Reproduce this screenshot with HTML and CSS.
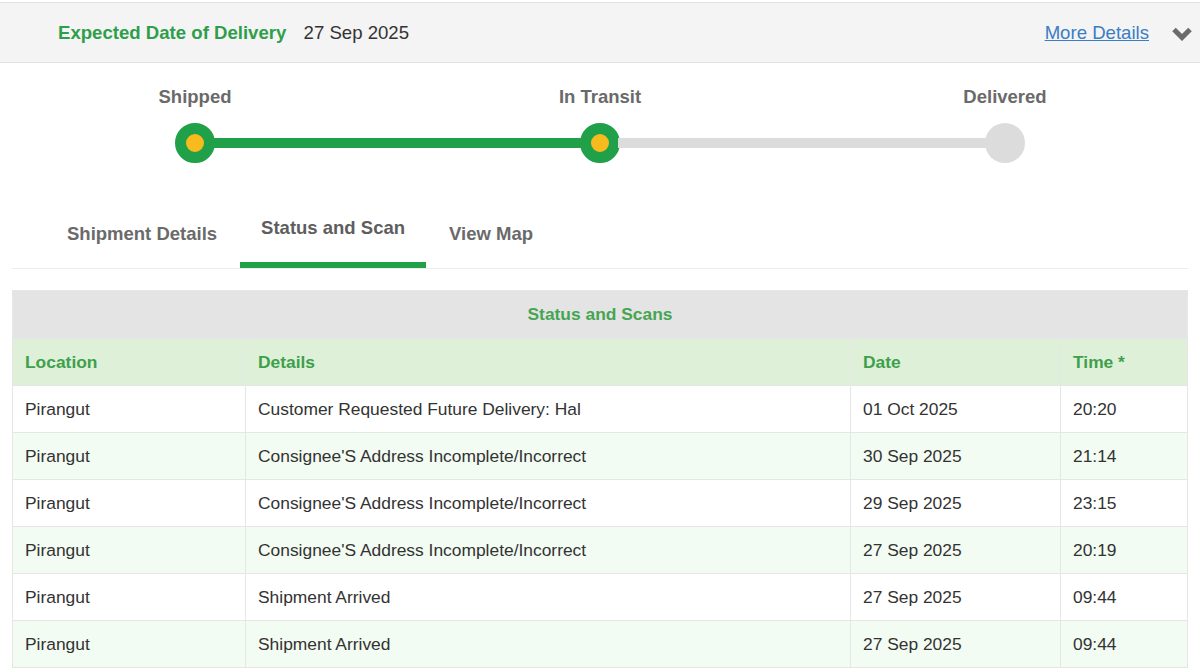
FILE: index.html
```html
<!DOCTYPE html>
<html lang="en">
<head>
    <meta charset="UTF-8">
    <meta name="viewport" content="width=device-width, initial-scale=1.0">
    <title>Track Shipment</title>
    <link rel="stylesheet" href="styles.css">
</head>
<body>
    <div class="delivery-bar">
        <div class="edd">
            <span class="edd-label">Expected Date of Delivery</span>
            <span class="edd-date">27 Sep 2025</span>
        </div>
        <div class="more">
            <a href="#" class="more-link">More Details</a>
            <svg class="chevron" width="22" height="14" viewBox="0 0 22 14">
                <polyline points="3,2.5 11,10.5 19,2.5" fill="none" stroke="#6b6b6b" stroke-width="5" stroke-linejoin="miter"/>
            </svg>
        </div>
    </div>

    <div class="progress">
        <div class="stop done">
            <div class="stop-label">Shipped</div>
            <div class="dot"></div>
        </div>
        <div class="connector done"></div>
        <div class="stop done">
            <div class="stop-label">In Transit</div>
            <div class="dot"></div>
        </div>
        <div class="connector"></div>
        <div class="stop">
            <div class="stop-label">Delivered</div>
            <div class="dot"></div>
        </div>
    </div>

    <div class="tabs">
        <div class="tab">Shipment Details</div>
        <div class="tab active">Status and Scan</div>
        <div class="tab">View Map</div>
    </div>

    <table class="scans">
        <colgroup>
            <col style="width: 233px">
            <col style="width: 605px">
            <col style="width: 210px">
            <col>
        </colgroup>
        <thead>
            <tr class="title-row"><th colspan="4">Status and Scans</th></tr>
            <tr class="head-row">
                <th>Location</th>
                <th>Details</th>
                <th>Date</th>
                <th>Time *</th>
            </tr>
        </thead>
        <tbody>
            <tr><td>Pirangut</td><td>Customer Requested Future Delivery: Hal</td><td>01 Oct 2025</td><td>20:20</td></tr>
            <tr><td>Pirangut</td><td>Consignee'S Address Incomplete/Incorrect</td><td>30 Sep 2025</td><td>21:14</td></tr>
            <tr><td>Pirangut</td><td>Consignee'S Address Incomplete/Incorrect</td><td>29 Sep 2025</td><td>23:15</td></tr>
            <tr><td>Pirangut</td><td>Consignee'S Address Incomplete/Incorrect</td><td>27 Sep 2025</td><td>20:19</td></tr>
            <tr><td>Pirangut</td><td>Shipment Arrived</td><td>27 Sep 2025</td><td>09:44</td></tr>
            <tr><td>Pirangut</td><td>Shipment Arrived</td><td>27 Sep 2025</td><td>09:44</td></tr>
        </tbody>
    </table>
</body>
</html>
```

FILE: styles.css
```css
body {
    font-family: "Liberation Sans", Arial, sans-serif;
    background-color: #fff;
    color: #333;
    margin: 0;
    padding: 0;
    overflow: hidden;
}

/* expected delivery strip */
.delivery-bar {
    margin-top: 2px;
    height: 59px;
    background-color: #f4f4f4;
    border-top: 1px solid #e2e2e2;
    border-bottom: 1px solid #e2e2e2;
    display: flex;
    align-items: center;
    justify-content: space-between;
    padding: 0 7px 0 58px;
    font-size: 18.6px;
}

.edd-label {
    color: #2f9e4b;
    font-weight: bold;
    margin-right: 12px;
}

.edd-date {
    color: #333;
}

.more {
    display: flex;
    align-items: center;
}

.more-link {
    color: #3b7cc4;
    text-decoration: underline;
    margin-right: 22px;
}

.chevron {
    display: block;
    margin-top: 2px;
}

/* progress tracker */
.progress {
    display: flex;
    align-items: flex-end;
    padding: 23px 0 0 175px;
    width: 850px;
}

.stop {
    width: 40px;
    display: flex;
    flex-direction: column;
    align-items: center;
}

.stop-label {
    white-space: nowrap;
    font-size: 18.5px;
    font-weight: bold;
    color: #6a6a6a;
    line-height: 22px;
    margin-bottom: 15px;
}

.dot {
    width: 40px;
    height: 40px;
    border-radius: 50%;
    background-color: #dcdcdc;
    box-sizing: border-box;
}

.stop.done .dot {
    background-color: #f8bb1d;
    border: 11px solid #21a04a;
}

.connector {
    flex: 1;
    height: 10px;
    margin: 0 -2px 15px;
    background-color: #dcdcdc;
}

.connector.done {
    background-color: #21a04a;
}

/* tabs */
.tabs {
    display: flex;
    align-items: flex-end;
    gap: 2px;
    margin: 54px 12px 0;
    padding-left: 34px;
    border-bottom: 1px solid #ececec;
}

.tab {
    padding: 0 21px 23px;
    font-size: 18.5px;
    font-weight: bold;
    color: #6a6a6a;
    line-height: 22px;
}

.tab.active {
    color: #5e5e5e;
    border-bottom: 6px solid #21a04a;
}

/* scans table */
.scans {
    margin: 21px 12px 0;
    width: 1176px;
    border-collapse: collapse;
    table-layout: fixed;
    font-size: 17.4px;
}

.scans th,
.scans td {
    border: 1px solid #e6e6e6;
    padding: 0 12px;
    height: 46px;
    text-align: left;
    white-space: nowrap;
}

.title-row th {
    background-color: #e4e4e4;
    color: #45a553;
    text-align: center;
    height: 47px;
}

.head-row th {
    background-color: #dff0d8;
    color: #3e9f4c;
}

.scans tbody tr:nth-child(even) td {
    background-color: #f2fcf2;
}
```
